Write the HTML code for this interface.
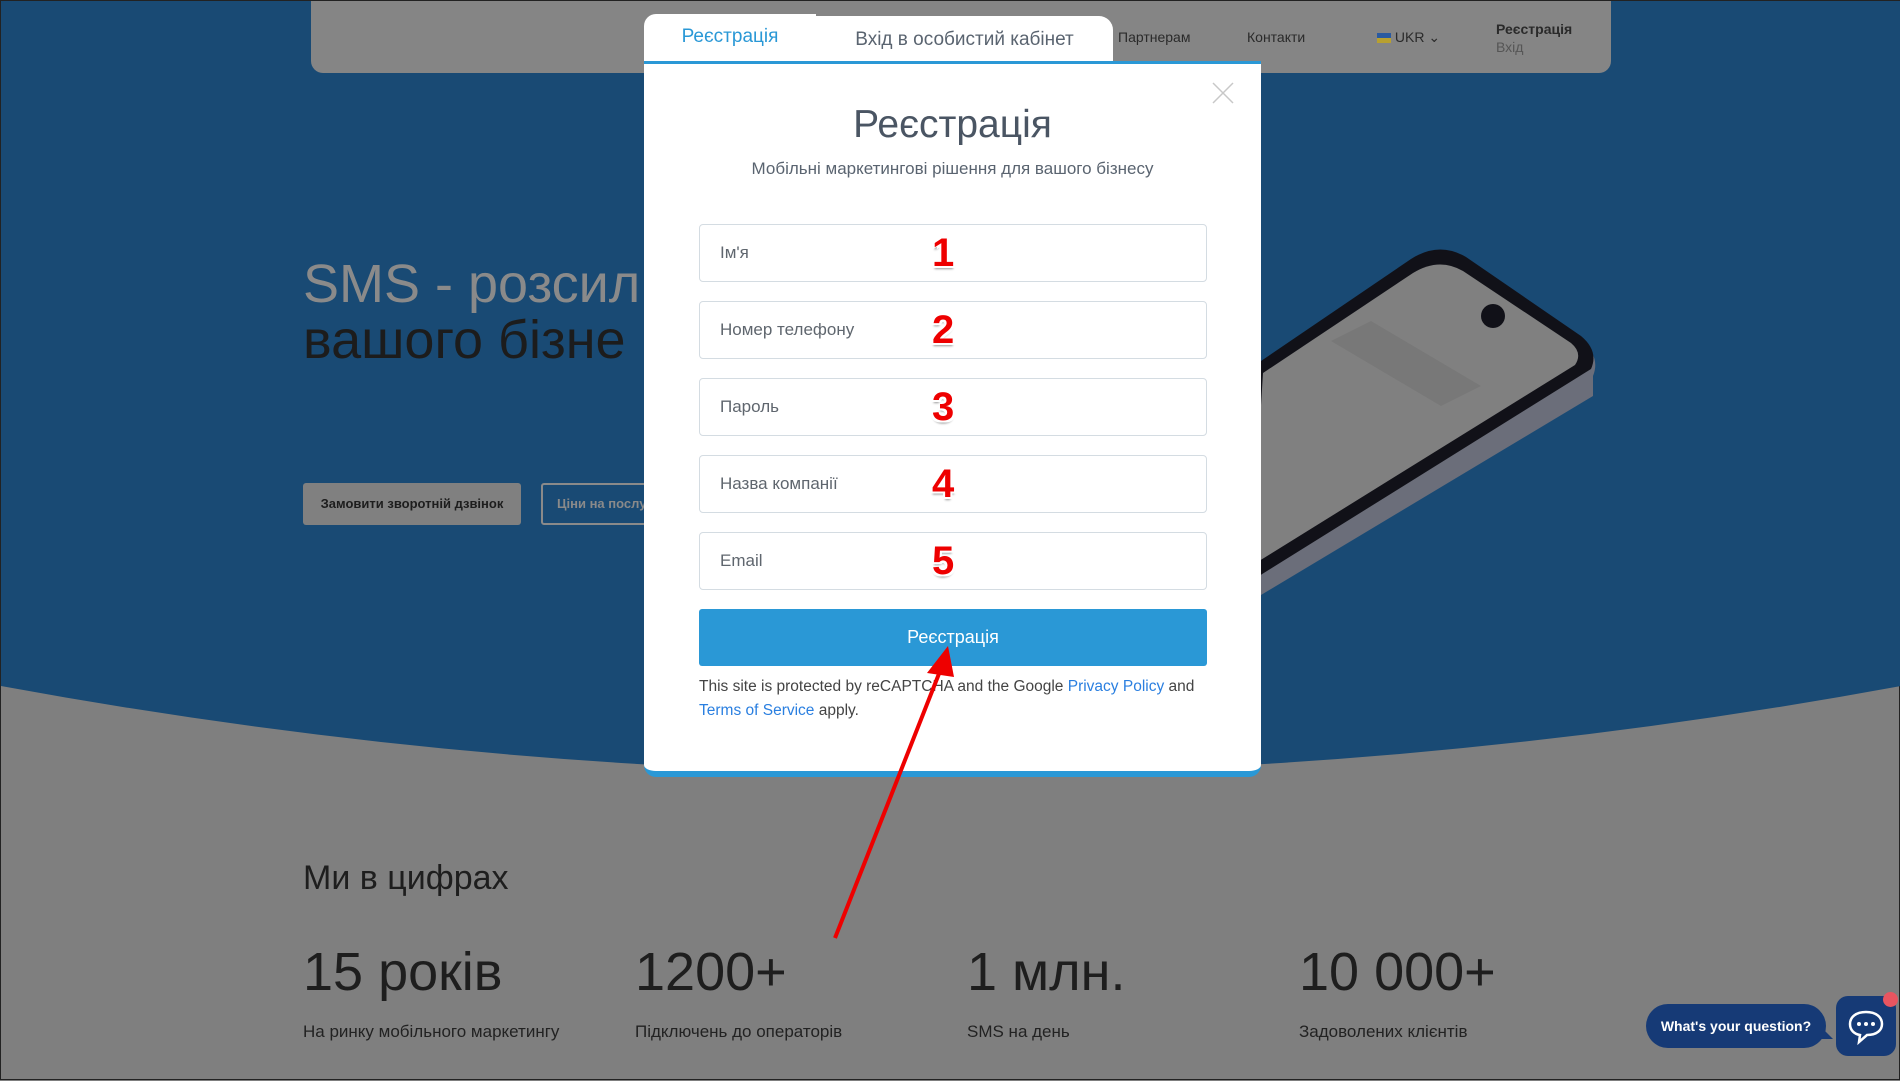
<!DOCTYPE html>
<html><head><meta charset="utf-8"><style>
*{margin:0;padding:0;box-sizing:border-box}
body{width:1900px;height:1080px;overflow:hidden;position:relative;background:#7f7f7f;font-family:"Liberation Sans","DejaVu Sans",sans-serif;border:1px solid #222}
.abs{position:absolute}
.hdr{left:310px;top:0;width:1300px;height:72px;background:#858585;border-radius:0 0 12px 12px}
.hdr span{position:absolute;font-size:14px;color:#2a2a2a}
.hero1{left:302px;top:252px;font-size:54px;color:#8a8a8a;white-space:nowrap}
.hero2{left:302px;top:308px;font-size:54px;color:#1c1c1c;white-space:nowrap}
.btn1{left:302px;top:482px;width:218px;height:42px;background:#808080;border-radius:3px;font-size:13px;font-weight:bold;color:#1d1d1d;line-height:42px;text-align:center}
.btn2{left:540px;top:482px;width:120px;height:42px;border:2px solid #8a8a8a;border-radius:3px;font-size:13px;font-weight:bold;color:#8a8a8a;line-height:38px;padding-left:14px;white-space:nowrap;overflow:hidden}
.modal{left:643px;top:60px;width:617px;height:716px;background:#fff;border-top:3px solid #2a98d6;border-bottom:6px solid #2a98d6;border-radius:0 0 12px 12px}
.tab1{left:643px;top:13px;width:172px;height:47px;background:#fff;border-radius:12px 0 0 0;color:#2a98d6;font-size:19px;text-align:center;line-height:46px}
.tab2{left:815px;top:15px;width:297px;height:45px;background:#fff;border-radius:0 14px 0 0;color:#5a6470;font-size:19px;text-align:center;line-height:48px}
.title{left:643px;width:617px;top:102px;text-align:center;font-size:39px;color:#4a5563}
.sub{left:643px;width:617px;top:158px;text-align:center;font-size:17px;color:#5a6470}
.inp{left:698px;width:508px;height:58px;border:1px solid #d4dce2;border-radius:4px;background:#fff;font-size:17px;color:#5f666e;line-height:56px;padding-left:20px}
.num{position:absolute;left:232px;top:4px;font-size:40px;font-weight:bold;color:#e00;line-height:48px;text-shadow:-2px 2px 0 #fff,2px 2px 0 #fff,0 3px 2px #999}
.sbtn{left:698px;top:608px;width:508px;height:57px;background:#2a98d6;border-radius:3px;color:#fff;font-size:18px;text-align:center;line-height:57px}
.cap{left:698px;top:674px;width:510px;font-size:15.5px;color:#444;line-height:24px}
.cap a{color:#2a7fe0;text-decoration:none}
.h2{left:302px;top:858px;font-size:34px;color:#1e1e1e}
.stat{font-size:54px;color:#1e1e1e;top:940px;white-space:nowrap}
.lbl{font-size:17px;color:#222;top:1021px;white-space:nowrap}
</style></head><body>
<svg class="abs" style="left:0;top:0" width="1900" height="1080">
<path d="M0 0H1900V685Q950 860 0 685Z" fill="#194a74"/>
<g>
<path d="M1280 370 L1415 257 Q1440 245 1465 258 L1580 340 Q1600 355 1592 375 L1592 395 L1250 600 Z" fill="#6b6e7a"/>
<path d="M1260 360 L1410 258 Q1438 240 1465 256 L1580 335 Q1598 350 1590 368 L1250 580 Z" fill="#111118"/>
<path d="M1262 372 L1412 272 Q1438 256 1462 270 L1570 342 Q1582 352 1574 364 L1250 565 Z" fill="#808080"/>
<circle cx="1492" cy="315" r="12" fill="#111118"/>
<path d="M1330 340 L1370 320 L1480 385 L1440 405 Z" fill="#787878"/>
</g>
</svg>
<div class="abs hdr">
<span style="left:807px;top:28px">Партнерам</span>
<span style="left:936px;top:28px">Контакти</span>
<span style="left:1066px;top:28px"><i style="display:inline-block;width:14px;height:10px;background:linear-gradient(#2a5aa0 50%,#b8a030 50%);vertical-align:-1px"></i> UKR ⌄</span>
<span style="left:1185px;top:20px;font-weight:bold">Реєстрація</span>
<span style="left:1185px;top:38px;color:#555">Вхід</span>
</div>
<div class="abs hero1">SMS - розсил</div>
<div class="abs hero2">вашого бізне</div>
<div class="abs btn1">Замовити зворотній дзвінок</div>
<div class="abs btn2">Ціни на послуги</div>
<div class="abs h2">Ми в цифрах</div>
<div class="abs stat" style="left:302px">15 років</div>
<div class="abs stat" style="left:634px">1200+</div>
<div class="abs stat" style="left:966px">1 млн.</div>
<div class="abs stat" style="left:1298px">10 000+</div>
<div class="abs lbl" style="left:302px">На ринку мобільного маркетингу</div>
<div class="abs lbl" style="left:634px">Підключень до операторів</div>
<div class="abs lbl" style="left:966px">SMS на день</div>
<div class="abs lbl" style="left:1298px">Задоволених клієнтів</div>

<div class="abs modal"></div>
<div class="abs tab1">Реєстрація</div>
<div class="abs tab2">Вхід в особистий кабінет</div>
<svg class="abs" style="left:1211px;top:81px" width="22" height="22"><path d="M1 1L21 21M21 1L1 21" stroke="#c8c8c8" stroke-width="1.5"/></svg>
<div class="abs title">Реєстрація</div>
<div class="abs sub">Мобільні маркетингові рішення для вашого бізнесу</div>
<div class="abs inp" style="top:223px">Ім'я<span class="num">1</span></div>
<div class="abs inp" style="top:300px">Номер телефону<span class="num">2</span></div>
<div class="abs inp" style="top:377px">Пароль<span class="num">3</span></div>
<div class="abs inp" style="top:454px">Назва компанії<span class="num">4</span></div>
<div class="abs inp" style="top:531px">Email<span class="num">5</span></div>
<div class="abs sbtn">Реєстрація</div>
<div class="abs cap">This site is protected by reCAPTCHA and the Google <a>Privacy Policy</a> and <a>Terms of Service</a> apply.</div>
<svg class="abs" style="left:0;top:0;pointer-events:none" width="1900" height="1080">
<path d="M834 937 L943 660" stroke="#e00" stroke-width="4"/>
<path d="M947 645 L926 672 L953 676 Z" fill="#e00"/>
</svg>

<div class="abs" style="left:1645px;top:1003px;width:180px;height:44px;background:#163a76;border-radius:22px;color:#fff;font-weight:bold;font-size:14px;line-height:44px;text-align:center">What's your question?</div>
<div class="abs" style="left:1820px;top:1026px;width:0;height:0;border-left:12px solid #163a76;border-top:12px solid transparent"></div>
<div class="abs" style="left:1835px;top:995px;width:60px;height:60px;background:#163a76;border-radius:12px"></div>
<svg class="abs" style="left:1846px;top:1008px" width="38" height="36"><path d="M19 3C9 3 3 8 3 15c0 6 4 10 10 11l-1 7 8-7c10 0 15-5 15-11C35 8 29 3 19 3Z" fill="none" stroke="#fff" stroke-width="2.5"/><circle cx="12" cy="15" r="2" fill="#fff"/><circle cx="19" cy="15" r="2" fill="#fff"/><circle cx="26" cy="15" r="2" fill="#fff"/></svg>
<div class="abs" style="left:1882px;top:991px;width:15px;height:15px;border-radius:50%;background:#e85560"></div>
</body></html>
